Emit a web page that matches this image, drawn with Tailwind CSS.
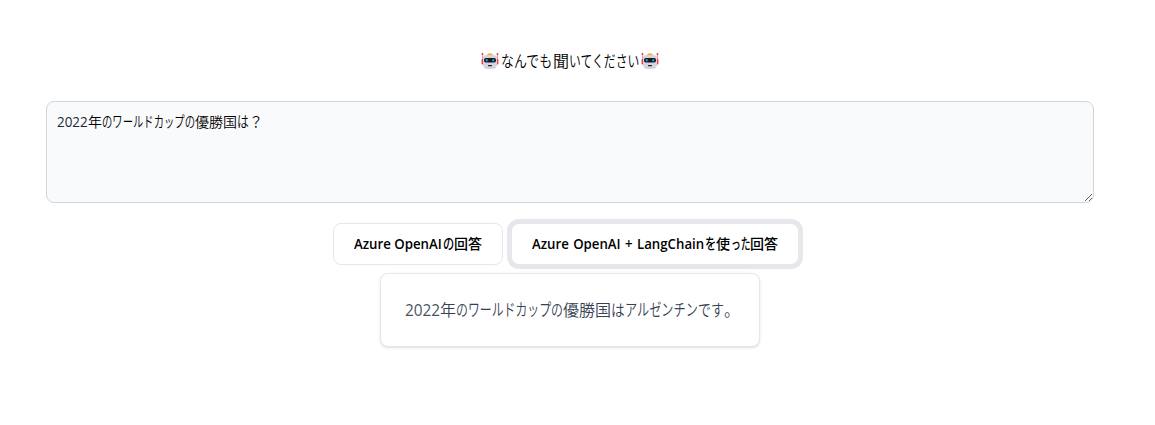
<!DOCTYPE html>
<html lang="ja">
<head>
<meta charset="utf-8">
<title>なんでも聞いてください</title>
<script src="https://cdn.jsdelivr.net/npm/@tailwindcss/browser@4"></script>
</head>
<body class="bg-white font-['Open_Sans','Noto_Sans_CJK_JP',sans-serif] text-black">
<svg class="hidden">
  <symbol id="robot" viewBox="0 0 18 16">
    <path d="M5.500 2.700Q6 .2 9 .2T12.500 2.700Z" fill="#fbb02c"/>
    <path d="M1.500 1v7M16.500 1v7" stroke="#f79a9d" stroke-width="1"/>
    <circle cx="1.500" cy="1" r=".9" fill="#f02c3a"/><circle cx="16.500" cy="1" r=".9" fill="#f02c3a"/>
    <rect x=".6" y="6" width="2" height="5.500" rx=".8" fill="#f8303f"/><rect x="15.400" y="6" width="2" height="5.500" rx=".8" fill="#f8303f"/>
    <path d="M4.500 2.200h9Q16 2.200 16 5v6q0 5-4.500 5h-5Q2 16 2 11V5q0-2.800 2.500-2.800Z" fill="#d8d3e1"/>
    <rect x="3" y="5" width="12" height="4.500" rx="1.800" fill="#1c1820"/>
    <rect x="4.600" y="6" width="2.200" height="2.500" rx=".7" fill="#079ae4"/><rect x="11.200" y="6" width="2.200" height="2.500" rx=".7" fill="#079ae4"/>
    <rect x="7" y="12" width="4" height="1.300" rx=".5" fill="#28242e"/>
  </symbol>
</svg>
<main class="ml-[46px] w-[1048px] pt-[49px]">
  <h1 class="flex h-6 items-center justify-center text-base font-[350] whitespace-nowrap">
    <svg class="mr-[2px] h-4 w-[18px]"><use href="#robot"/></svg>
    <span class="w-[52px]"><span class="inline-block origin-left scale-x-[.81] scale-y-[1.02]">なんでも</span></span><span class="w-4">聞</span><span class="w-[71px]"><span class="inline-block origin-left scale-x-[.74] scale-y-[1.02]">いてください</span></span>
    <svg class="ml-px h-4 w-[18px]"><use href="#robot"/></svg>
  </h1>
  <div role="textbox" aria-multiline="true" class="mt-7 flex h-[102px] resize items-start overflow-auto rounded-lg border border-gray-300 bg-gray-50 p-2.5 text-sm font-[350] whitespace-nowrap">
    <span class="w-[31px]"><span class="inline-block origin-left scale-x-[.96] font-normal text-gray-800">2022</span></span><span class="w-3.5">年</span><span class="w-[93px]"><span class="inline-block origin-left scale-x-[.738] scale-y-[1.05]">のワールドカップの</span></span><span class="w-[42px]">優勝国</span><span class="w-3"><span class="inline-block origin-left scale-x-[.84] scale-y-[1.02]">は</span></span><span class="w-3"><span class="inline-block">？</span></span>
  </div>
  <div class="mt-5 flex gap-2 pl-[287px] text-sm font-medium whitespace-nowrap">
    <button class="flex h-[42px] w-[170px] items-center rounded-lg border border-gray-200 bg-white px-5 text-left"><span class="w-[89px]"><span class="inline-block origin-left scale-x-[.945] font-semibold">Azure OpenAI</span></span><span class="w-[11px]"><span class="inline-block origin-left scale-x-[.8] scale-y-[1.02]">の</span></span><span>回答</span></button>
    <button class="flex h-[42px] w-[288px] items-center rounded-lg border border-gray-200 bg-white px-5 text-left ring-4 ring-gray-200"><span class="w-[173px]"><span class="inline-block origin-left scale-x-[.945] font-semibold [word-spacing:1px]">Azure OpenAI + LangChain</span></span><span class="w-[11px]"><span class="inline-block origin-left scale-x-[.8] scale-y-[1.02]">を</span></span><span class="w-[15px]">使</span><span class="w-[19px]"><span class="inline-block origin-left scale-x-[.7] scale-y-[1.02]">った</span></span><span>回答</span></button>
  </div>
  <div class="mt-2 ml-[334px] flex h-[74px] w-[380px] items-center rounded-lg border border-gray-200 bg-white px-6 text-base font-[350] whitespace-nowrap text-gray-700 shadow-sm">
    <span class="w-[35px]"><span class="inline-block origin-left scale-x-[.96] font-normal text-gray-600">2022</span></span><span class="w-4">年</span><span class="w-[107px]"><span class="inline-block origin-left scale-x-[.743] scale-y-[1.05]">のワールドカップの</span></span><span class="w-12">優勝国</span><span class="w-[14px]"><span class="inline-block origin-left scale-x-[.85] scale-y-[1.02]">は</span></span><span class="w-[73px]"><span class="inline-block origin-left scale-x-[.76] scale-y-[1.05]">アルゼンチン</span></span><span class="w-[26px]"><span class="inline-block origin-left scale-x-[.81] scale-y-[1.02]">です</span></span><span>。</span>
  </div>
  <div class="h-8"></div>
</main>
</body>
</html>
